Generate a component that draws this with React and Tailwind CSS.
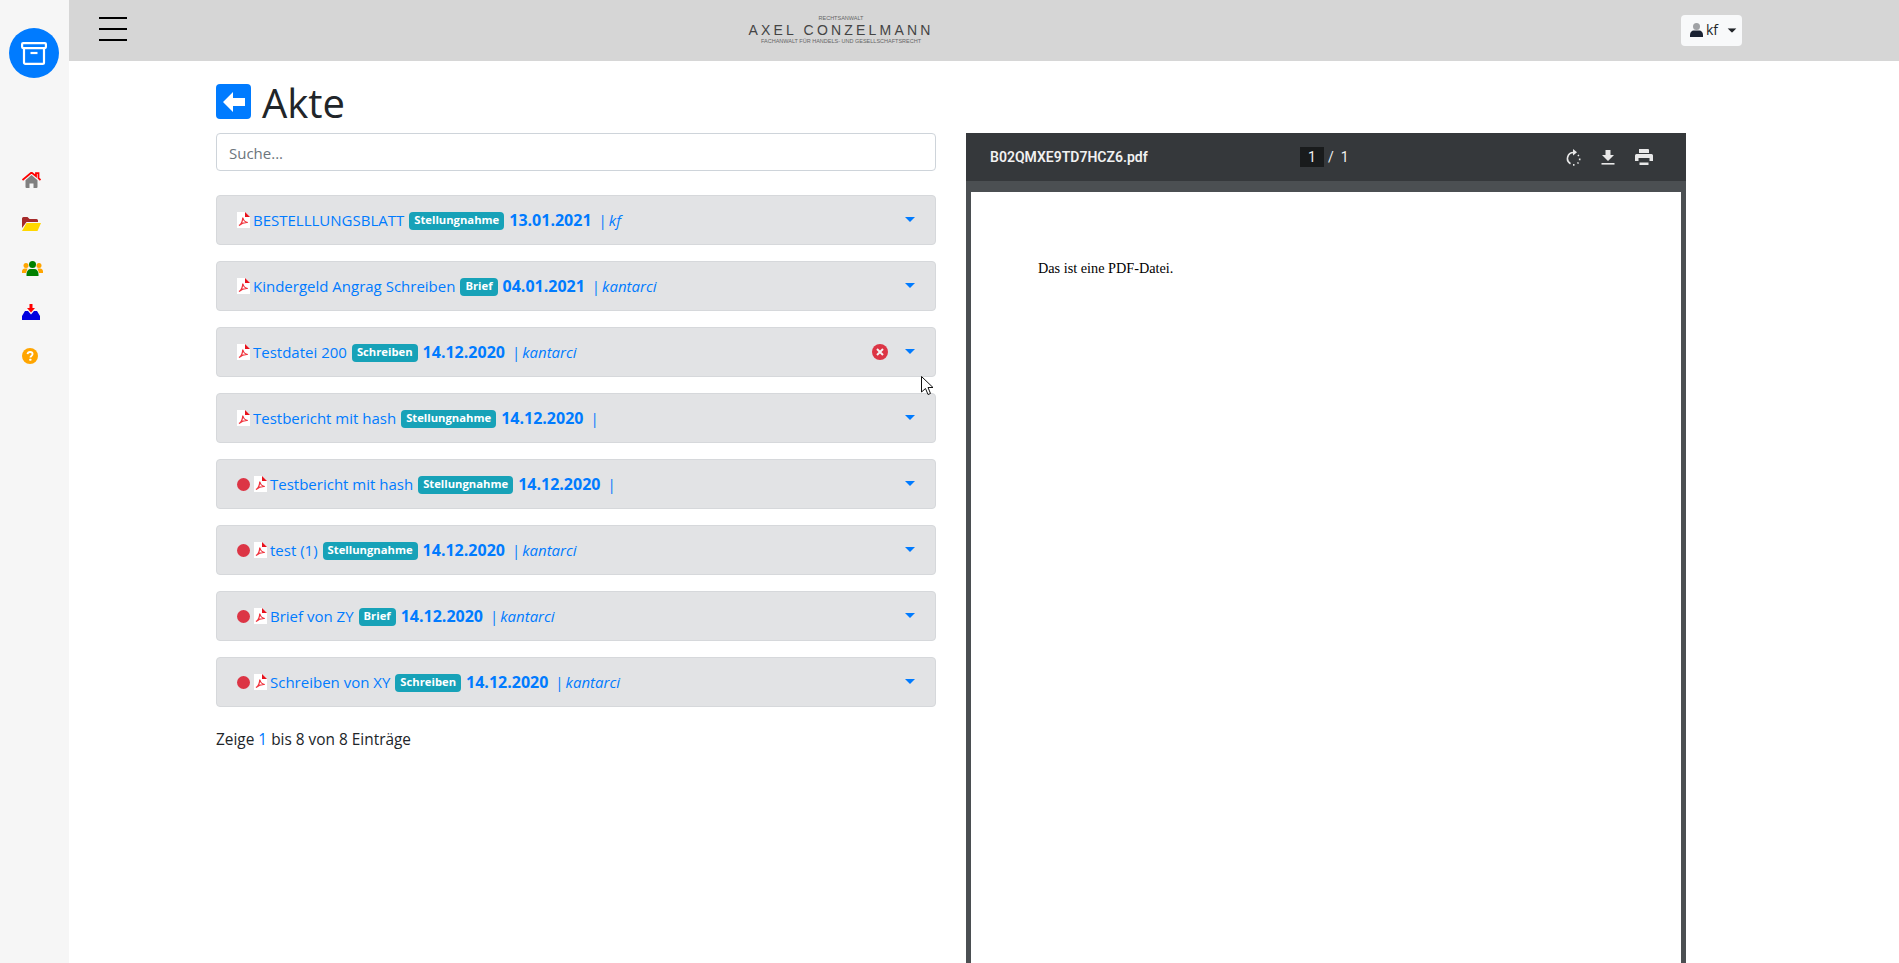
import React from 'react';

const files = [
  { name: 'BESTELLLUNGSBLATT', tag: 'Stellungnahme', date: '13.01.2021', user: 'kf' },
  { name: 'Kindergeld Angrag Schreiben', tag: 'Brief', date: '04.01.2021', user: 'kantarci' },
  { name: 'Testdatei 200', tag: 'Schreiben', date: '14.12.2020', user: 'kantarci', removable: true },
  { name: 'Testbericht mit hash', tag: 'Stellungnahme', date: '14.12.2020', user: '' },
  { name: 'Testbericht mit hash', tag: 'Stellungnahme', date: '14.12.2020', user: '', unread: true },
  { name: 'test (1)', tag: 'Stellungnahme', date: '14.12.2020', user: 'kantarci', unread: true },
  { name: 'Brief von ZY', tag: 'Brief', date: '14.12.2020', user: 'kantarci', unread: true },
  { name: 'Schreiben von XY', tag: 'Schreiben', date: '14.12.2020', user: 'kantarci', unread: true },
];

const PdfIcon = () => (
  <svg width="13" height="16" viewBox="0 0 13 16" className="shrink-0">
    <path d="M0 0h8l5 5v11H0z" fill="#fff" />
    <path d="M8 0l5 5H8z" fill="#e8121c" />
    <path d="M2 13.500c2-1 3.500-4 3.800-8 .6 3 2.200 4.600 5 5-3-.2-6 .6-8.800 3z" fill="none" stroke="#f0323c" strokeWidth="1.200" />
  </svg>
);

const HomeIcon = () => (
  <svg width="19" height="16" viewBox="0 0 19 16">
    <path d="M3.500 8.200L9.500 3l6 5.200V15a1 1 0 0 1-1 1h-3v-4.500h-4V16h-3a1 1 0 0 1-1-1z" fill="#808080" />
    <path d="M.5 8L9.500.5 14 4.200V1.200h2.500v5L18.500 8" fill="none" stroke="#f00" strokeWidth="1.800" />
  </svg>
);

const FolderIcon = () => (
  <svg width="19" height="14" viewBox="0 0 19 14">
    <path d="M0 1.500A1.500 1.500 0 0 1 1.500 0h4l2 2h7A1.500 1.500 0 0 1 16 3.500V5H4.500L0 11z" fill="#a52a2a" />
    <path d="M4.500 6H19l-3.500 8H0z" fill="#ffd700" />
  </svg>
);

const UsersIcon = () => (
  <svg width="21" height="15" viewBox="0 0 21 15">
    <circle cx="4" cy="4.500" r="2.500" fill="#ffa500" />
    <circle cx="17" cy="4.500" r="2.500" fill="#ffa500" />
    <path d="M0 11a3 3 0 0 1 3-3.500h2.500L4 12H0zM21 11a3 3 0 0 0-3-3.500h-2.500L17 12h4z" fill="#ffa500" />
    <circle cx="10.500" cy="3.500" r="3.500" fill="#008000" />
    <path d="M4.500 13c0-3 2-5 4-5h4c2 0 4 2 4 5v2h-12z" fill="#008000" />
  </svg>
);

const InboxIcon = () => (
  <svg width="18" height="16" viewBox="0 0 18 16">
    <path d="M0 12l3-5h3l3 3.500L12 7h3l3 5v4H0z" fill="#0000e0" />
    <path d="M7.500 0h3v4H13L9 8.500 5 4h2.500z" fill="#f00" />
  </svg>
);

const HelpIcon = () => (
  <svg width="16" height="16" viewBox="0 0 16 16">
    <circle cx="8" cy="8" r="8" fill="#ffa500" />
    <path d="M5.500 6.200C5.700 4.800 6.800 4 8.100 4c1.400 0 2.500.9 2.500 2.100 0 1.800-2.200 1.800-2.200 3.300" fill="none" stroke="#fff" strokeWidth="1.800" />
    <rect x="7.300" y="10.700" width="2.100" height="2.100" rx=".5" fill="#fff" />
  </svg>
);

const ArchiveIcon = () => (
  <svg width="26" height="23" viewBox="0 0 26 23" fill="none" stroke="#fff" strokeWidth="2.200">
    <rect x="1.100" y="1.100" width="23.800" height="5" rx="1" />
    <path d="M3 6v14.500a1.400 1.400 0 0 0 1.400 1.400h17.200a1.400 1.400 0 0 0 1.400-1.400V6" />
    <path d="M9.500 11h7" />
  </svg>
);

const UserIcon = () => (
  <svg width="13" height="14" viewBox="0 0 13 14">
    <circle cx="6.500" cy="3.500" r="3.500" fill="#a0a2a5" />
    <path d="M0 12c0-3 2-4.500 3.500-4.500h6C11 7.500 13 9 13 12v2H0z" fill="#1a2233" />
  </svg>
);

const Caret = ({ className }) => (
  <svg width="10" height="5" viewBox="0 0 10 5" className={className}>
    <path d="M0 0h10L5 5z" fill="currentColor" />
  </svg>
);

const RotateIcon = () => (
  <svg width="15" height="17" viewBox="0 0 15 17" fill="none" stroke="#e8e8e8" strokeWidth="1.600">
    <path d="M7.500 3.500a6 6 0 0 0-3 11.200" />
    <path d="M7 0l4 3.300L7 6.500z" fill="#e8e8e8" stroke="none" />
    <path d="M7 15.900h1.500M11.500 14.500l1-1M13.700 11.300V9.500M12.800 7l-.8-1" />
  </svg>
);

const DownloadIcon = () => (
  <svg width="14" height="15" viewBox="0 0 14 15" fill="#e8e8e8">
    <path d="M4.500 0h5v5H13L7 11 1 5h3.500z" />
    <rect x="0.500" y="13" width="13" height="1.600" />
  </svg>
);

const PrintIcon = () => (
  <svg width="18" height="16" viewBox="0 0 18 16" fill="#e8e8e8">
    <path d="M4 0h9.500L14 .5V4H4z" />
    <path d="M1.500 5h15A1.500 1.500 0 0 1 18 6.500V12h-3.500V9h-11v3H0V6.500A1.500 1.500 0 0 1 1.500 5z" />
    <path d="M4.500 13.500h9V16h-9z" />
    <rect x="5.500" y="10" width="7" height="2.500" fill="#35383b" />
  </svg>
);

const FileRow = ({ file }) => (
  <div className="h-[50px] flex items-center pl-5 pr-5 bg-[#e2e3e5] border border-[#d6d8db] rounded text-[#007bff] text-[15px] whitespace-nowrap">
    {file.unread && <span className="w-[13px] h-[13px] rounded-full bg-[#dc3545] mr-[4px] shrink-0" />}
    <PdfIcon />
    <span className="ml-[3px]">{file.name}</span>
    <span className="ml-[5px] h-[18px] px-[5px] flex items-center rounded bg-[#17a2b8] text-white text-[11.25px] font-bold mt-[1px]">{file.tag}</span>
    <span className="ml-[5px] text-base font-bold">{file.date}</span>
    <span className="ml-[7px]">|</span>
    {file.user && <span className="ml-[2px] italic">{file.user}</span>}
    <span className="ml-auto flex items-center">
      {file.removable && (
        <span className="w-4 h-4 mr-[17px] rounded-full bg-[#dc3545] flex items-center justify-center">
          <svg width="8" height="8" viewBox="0 0 8 8"><path d="M1 1l6 6M7 1L1 7" stroke="#f4f4f4" strokeWidth="2" /></svg>
        </span>
      )}
      <Caret className="-mt-[2px]" />
    </span>
  </div>
);

export default function App() {
  return (
    <div className="relative flex h-screen overflow-hidden bg-white text-[#212529] font-['Open_Sans',sans-serif]">
      {/* sidebar */}
      <aside className="w-[69px] shrink-0 bg-[#f6f6f6] flex flex-col">
        <div className="mt-7 ml-[9px] w-[50px] h-[50px] rounded-full bg-[#007bff] flex items-center justify-center">
          <ArchiveIcon />
        </div>
        <nav className="mt-[80px] ml-[22px] flex flex-col">
          {[HomeIcon, FolderIcon, UsersIcon, InboxIcon, HelpIcon].map((Icon, i) => (
            <div key={i} className="h-11 flex items-center"><Icon /></div>
          ))}
        </nav>
      </aside>

      <div className="flex-1 min-w-0 flex flex-col">
        {/* header */}
        <header className="h-[61px] shrink-0 bg-[#d6d6d6] flex items-center">
          <div className="ml-[30px] w-7 flex flex-col gap-[9px] -mt-[3px]">
            <span className="h-0.5 bg-black" />
            <span className="h-0.5 bg-black" />
            <span className="h-0.5 bg-black" />
          </div>
          <div className="ml-[621px] w-[186px] flex flex-col items-center text-[#666] font-['Liberation_Sans',sans-serif] leading-none -mt-[1px] whitespace-nowrap">
            <span className="text-[5.5px]">RECHTSANWALT</span>
            <span className="text-[14px] tracking-[3.2px] my-[2px] text-[#444]">AXEL CONZELMANN</span>
            <span className="text-[5.5px]">FACHANWALT FÜR HANDELS- UND GESELLSCHAFTSRECHT</span>
          </div>
          <button className="ml-[747px] w-[61px] h-[31px] -mt-[1px] rounded bg-[#f8f9fa] flex items-center pl-[9px] text-sm text-[#212529]">
            <UserIcon />
            <span className="ml-[3px]">kf</span>
            <Caret className="ml-[9px] scale-90" />
          </button>
        </header>

        {/* content */}
        <main className="flex-1 min-h-0 flex gap-[30px] pl-[147px]">
          <section className="w-[720px] shrink-0">
            <div className="h-[72px] pt-[9px] flex items-center">
              <span className="w-[35px] h-[35px] rounded bg-[#007bff] flex items-center justify-center">
                <svg width="22" height="20" viewBox="0 0 22 20"><path d="M0 10L10 0v6h12v8H10v6z" fill="#fff" /></svg>
              </span>
              <h1 className="ml-[11px] mt-[2px] text-[40px] font-medium leading-none">Akte</h1>
            </div>
            <input
              placeholder="Suche..."
              className="w-full h-[38px] px-3 pt-[2px] bg-white border border-[#ced4da] rounded text-[15px] placeholder:text-[#6c757d] outline-none"
            />
            <div className="mt-6 flex flex-col gap-4">
              {files.map((file, i) => <FileRow key={i} file={file} />)}
            </div>
            <p className="mt-[21px] text-[15.4px] leading-6">
              Zeige <span className="text-[#007bff]">1</span> bis 8 von 8 Einträge
            </p>
          </section>

          {/* pdf viewer */}
          <section className="w-[720px] shrink-0 mt-[72px] bg-[#4b4f52] flex flex-col">
            <div className="h-12 shrink-0 bg-[#35383b] flex items-center text-[#f1f1f1] font-['Roboto',sans-serif] text-sm">
              <span className="ml-6 w-[310px] font-semibold">B02QMXE9TD7HCZ6.pdf</span>
              <span className="w-6 h-5 bg-[#191b1c] text-center text-sm leading-5">1</span>
              <span className="ml-[4px] text-sm">/</span>
              <span className="ml-[7px] text-sm">1</span>
              <span className="ml-auto mr-[33px] flex items-center gap-5">
                <RotateIcon />
                <DownloadIcon />
                <PrintIcon />
              </span>
            </div>
            <div className="flex-1 min-h-0 mt-[11px] ml-[5px] mr-[5px] bg-white pt-[68px] pl-[67px] font-['Liberation_Serif',serif] text-[14.25px] leading-4 text-black">
              Das ist eine PDF-Datei.
            </div>
          </section>
        </main>
      </div>

      {/* mouse pointer */}
      <svg width="13" height="20" viewBox="0 0 13 20" className="absolute left-[921px] top-[376px]">
        <path d="M.5.500v15.500l4-3.500 2.500 6 2.500-1-2.500-6h5z" fill="#fff" stroke="#111" strokeWidth="1" />
      </svg>
    </div>
  );
}
